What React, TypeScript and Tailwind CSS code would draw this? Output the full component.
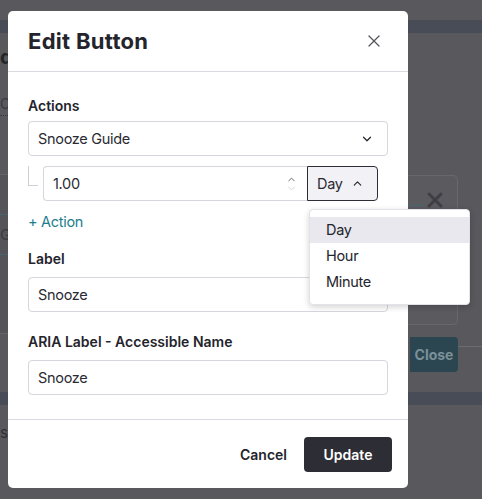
import { X, ChevronDown, ChevronUp } from 'lucide-react'

function Field({ value }: { value: string }) {
  return (
    <div className="flex h-[35px] items-center rounded-[4px] border border-[#d6d6de] px-[9px] text-[14.5px] tracking-[-0.3px] text-[#2a2a32]">
      {value}
    </div>
  )
}

function Backdrop() {
  return (
    <div className="flex h-full w-full flex-col bg-[#58585d]">
      <div className="h-[20px] shrink-0" />
      <div className="h-[13px] shrink-0 bg-[#484c56]" />
      <div className="flex h-[359px] shrink-0">
        {/* left strip */}
        <div className="flex w-[8px] flex-col overflow-hidden font-['Inter',sans-serif]">
          <div className="mt-[12px] text-[20px] font-bold leading-[24px] text-[#26262b]">d</div>
          <div className="mt-[26px] border-b border-dotted border-[#3a3a40] pb-[2px] text-[14px] leading-[18px] text-[#3b3b42]">
            ON
          </div>
          <div className="mt-[58px] h-[160px] border-y border-[#66666a] bg-[#555559]">
            <div className="mt-[39px] border-t border-dashed border-[#3f6a78]" />
            <div className="mt-[10px] text-[15px] leading-[20px] text-[#3b3b42]">Gc</div>
            <div className="mt-[9px] border-t border-dashed border-[#3f6a78]" />
          </div>
        </div>
        <div className="w-[400px]" />
        {/* right strip */}
        <div className="flex w-[74px] flex-col">
          <div className="mt-[142px] flex h-[150px] w-[50px] flex-col rounded-r-[5px] border border-l-0 border-[#68686c] bg-[#5b5b5f]">
            <div className="mt-[12px] flex items-center">
              <div className="mt-[10px] h-0 w-[15px] border-t border-dashed border-[#3f6a78]" />
              <X size={24} strokeWidth={3} className="text-[#3e3e44]" />
            </div>
          </div>
          <div className="mt-[12px] flex items-start">
            <div className="ml-[2px] flex h-[35px] w-[48px] items-center justify-center rounded-r-[4px] bg-[#2b4650] font-['Inter',sans-serif] text-[14px] font-bold text-[#7a9099]">
              Close
            </div>
            <div className="mt-[9px] h-0 flex-1 border-t border-[#6c6c70]" />
          </div>
        </div>
      </div>
      <div className="h-[13px] shrink-0 bg-[#484c56]" />
      <div className="flex flex-1">
        <div className="mt-[18px] w-[8px] overflow-hidden font-['Inter',sans-serif] text-[15px] leading-[20px] text-[#2f2f35]">
          s
        </div>
      </div>
    </div>
  )
}

export default function App() {
  return (
    <div className="relative h-[499px] w-[482px] overflow-hidden font-['Inter',sans-serif]">
      <Backdrop />

      <div className="absolute left-[8px] top-[11px] flex h-[477px] w-[400px] flex-col rounded-[5px] bg-white">
        <div className="flex h-[61px] shrink-0 items-center justify-between border-b border-[#d9d9e0] pl-[20px] pr-[24px]">
          <h1 className="text-[22px] font-bold tracking-[0.3px] text-[#24242c]">Edit Button</h1>
          <X size={20} strokeWidth={1.5} className="text-[#55555c]" />
        </div>

        <div className="flex flex-1 flex-col px-[20px] pt-[24px]">
          <div className="text-[14px] font-semibold leading-[20px] text-[#24242c]">Actions</div>
          <div className="mt-[5px] flex h-[35px] items-center justify-between rounded-[4px] border border-[#d6d6de] pl-[9px] pr-[13px] text-[14.5px] tracking-[-0.3px] text-[#2a2a32]">
            <span>Snooze Guide</span>
            <ChevronDown size={14} strokeWidth={2.2} className="text-[#2a2a32]" />
          </div>

          <div className="mt-[10px] flex">
            <div className="mr-[5px] h-[20px] w-[10px] shrink-0 border-b border-l border-[#cfcfd6]" />
            <div className="flex h-[35px] w-[264px] items-center justify-between rounded-l-[4px] border border-r-0 border-[#d6d6de] pl-[9px] pr-[10px] text-[14.5px] tracking-[-0.3px] text-[#2a2a32]">
              <span>1.00</span>
              <div className="flex flex-col items-center">
                <ChevronUp size={11} strokeWidth={2} className="text-[#5e5e66]" />
                <ChevronDown size={11} strokeWidth={2} className="-mt-[2px] text-[#d2d2d8]" />
              </div>
            </div>
            <div className="flex h-[35px] w-[71px] items-center justify-between rounded-r-[4px] border border-[#2d2d35] bg-[#f2f1f6] pl-[9px] pr-[13px] text-[14.5px] tracking-[-0.3px] text-[#2a2a32]">
              <span>Day</span>
              <ChevronUp size={13} strokeWidth={2.2} className="text-[#2a2a32]" />
            </div>
          </div>

          <div className="mt-[11px] text-[14.5px] leading-[20px] tracking-[-0.3px] text-[#1d7d8c]">+ Action</div>

          <div className="mt-[17px] text-[14px] font-semibold leading-[20px] text-[#24242c]">Label</div>
          <div className="mt-[8px]">
            <Field value="Snooze" />
          </div>

          <div className="mt-[20px] text-[14px] font-semibold leading-[20px] text-[#24242c]">
            ARIA Label - Accessible Name
          </div>
          <div className="mt-[8px]">
            <Field value="Snooze" />
          </div>
        </div>

        <div className="flex h-[69px] shrink-0 items-center justify-end gap-[17px] border-t border-[#d9d9e0] pr-[16px]">
          <button type="button" className="text-[14px] font-semibold text-[#24242c]">
            Cancel
          </button>
          <button
            type="button"
            className="flex h-[35px] w-[88px] items-center justify-center rounded-[4px] bg-[#2d2d35] text-[14px] font-semibold text-white"
          >
            Update
          </button>
        </div>
      </div>

      {/* open unit menu */}
      <div className="absolute left-[309px] top-[209px] w-[161px] rounded-[4px] border border-[#e2e2e8] bg-white pb-[9px] pt-[7px] text-[14.5px] tracking-[-0.3px] text-[#24242c] shadow-[0_2px_6px_rgba(0,0,0,0.18)]">
        <div className="flex h-[26px] items-center bg-[#e8e8ee] pl-[16px]">Day</div>
        <div className="flex h-[26px] items-center pl-[16px]">Hour</div>
        <div className="flex h-[26px] items-center pl-[16px]">Minute</div>
      </div>
    </div>
  )
}
